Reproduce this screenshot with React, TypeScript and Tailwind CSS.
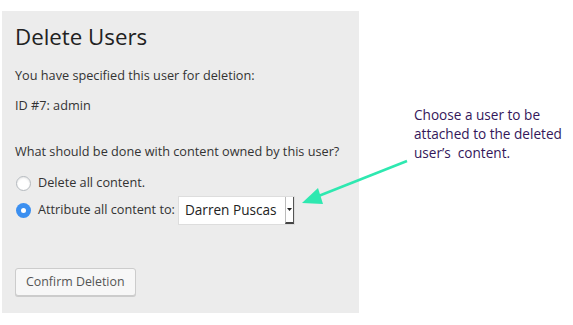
import React from 'react';

export default function App() {
  return (
    <div className="relative w-[573px] h-[325px] bg-white overflow-hidden" style={{ fontFamily: '"Open Sans", sans-serif' }}>
      <div className="absolute left-[2px] top-[11px] w-[357px] h-[302px] bg-[#ececec] px-[13px] pt-[11px] text-[#333] text-[12.7px] whitespace-nowrap">
        <h1 className="text-[22.3px] leading-[30px] text-[#222] font-normal">Delete Users</h1>
        <p className="mt-[13px] leading-[20px]">You have specified this user for deletion:</p>
        <p className="mt-[10px] leading-[20px]">ID #7: admin</p>
        <p className="mt-[26px] leading-[20px]">What should be done with content owned by this user?</p>
        <div className="mt-[12px] flex items-center gap-[7px] h-[20px]">
          <span className="ml-[1px] w-[15px] h-[15px] rounded-full border border-[#b4b9be] bg-white shadow-[inset_0_1px_2px_rgba(0,0,0,0.1)]" />
          <span>Delete all content.</span>
        </div>
        <div className="mt-[2px] flex items-center h-[30px]">
          <span className="ml-[1px] w-[15px] h-[15px] rounded-full bg-[#3b8ff0] flex items-center justify-center">
            <span className="w-[5px] h-[5px] rounded-full bg-white" />
          </span>
          <span className="ml-[7px]">Attribute all content to:</span>
          <div className="ml-[3px] flex items-stretch h-[29px] w-[117px] bg-white border border-[#ddd]">
            <span className="flex-1 flex items-center pl-[6px] text-[13.6px] text-[#222]">Darren Puscas</span>
            <span className="w-[9px] border-l border-[#bbb] border-r border-r-[#555] border-b-2 border-b-[#444] flex items-center justify-center">
              <svg width="5" height="3" viewBox="0 0 5 3"><path d="M0 0h5L2.5 3z" fill="#222" /></svg>
            </span>
          </div>
        </div>
        <button className="mt-[43px] h-[28px] px-[10px] bg-[#f7f7f7] border border-[#ccc] rounded-[3px] shadow-[0_1px_0_#ccc] text-[12.4px] text-[#555]">
          Confirm Deletion
        </button>
      </div>
      <div className="absolute left-[414px] top-[105px] whitespace-nowrap text-[13.6px] leading-[19px] text-[#34175a]" style={{ fontFamily: '"Open Sans", sans-serif' }}>
        Choose a user to be<br />attached to the deleted<br />user’s&nbsp; content.
      </div>
      <svg className="absolute left-0 top-0" width="573" height="325">
        <line x1="407" y1="161" x2="316" y2="197" stroke="#2ee8b0" strokeWidth="2.5" />
        <path d="M302 203 L318 188 L323 204 Z" fill="#2ee8b0" />
      </svg>
    </div>
  );
}
